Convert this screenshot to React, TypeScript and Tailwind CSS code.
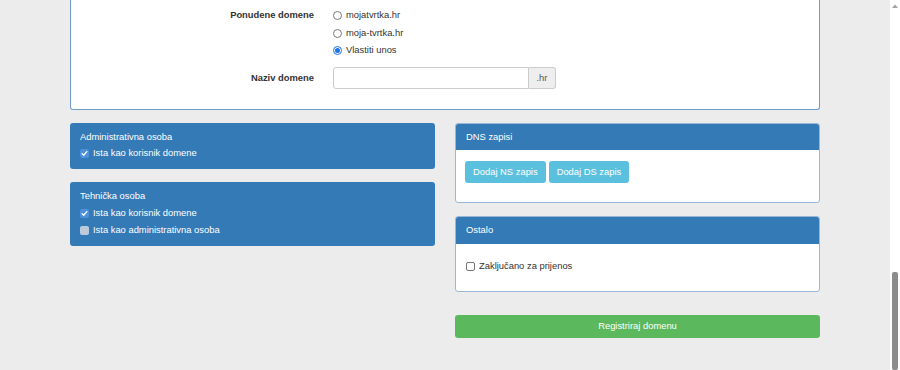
import React from "react";

const font = { fontFamily: '"Liberation Sans", Arial, sans-serif' };

function BlueCheck({ checked, disabled }: { checked?: boolean; disabled?: boolean }) {
  if (checked) {
    return (
      <span className="flex h-[9px] w-[9px] items-center justify-center rounded-[2px] bg-[#4d90dc]">
        <svg width="7" height="7" viewBox="0 0 8 8">
          <path d="M1.3 4.2 L3.1 6 L6.7 1.8" fill="none" stroke="#fff" strokeWidth="1.5" strokeLinecap="round" strokeLinejoin="round" />
        </svg>
      </span>
    );
  }
  return <span className={`h-[9px] w-[9px] rounded-[2px] ${disabled ? "bg-[#bccadc]" : "bg-white"}`} />;
}

function Radio({ checked }: { checked?: boolean }) {
  return (
    <span
      className={`flex h-[9px] w-[9px] items-center justify-center rounded-full border ${
        checked ? "border-[#1a73e8]" : "border-[#767676]"
      } bg-white`}
    >
      {checked && <span className="h-[5px] w-[5px] rounded-full bg-[#1a73e8]" />}
    </span>
  );
}

export default function App() {
  return (
    <div className="flex h-[370px] w-[900px] overflow-hidden text-[9.4px] text-[#333]" style={font}>
      <div className="w-[890px] bg-[#ececec] pl-[70px] pr-[70px]">
        {/* Top panel */}
        <div className="h-[110px] rounded-b-[3px] border-x border-b border-[#6f9cc9] bg-white pt-[6px]">
          <div className="flex">
            <div className="flex h-[18px] w-[243px] items-center justify-end font-bold">Ponudene domene</div>
            <div className="ml-[19px] flex flex-col">
              <label className="flex h-[18px] items-center gap-[4px]">
                <Radio />
                <span>mojatvrtka.hr</span>
              </label>
              <label className="flex h-[18px] items-center gap-[4px]">
                <Radio />
                <span>moja-tvrtka.hr</span>
              </label>
              <label className="flex h-[17px] items-center gap-[4px]">
                <Radio checked />
                <span>Vlastiti unos</span>
              </label>
            </div>
          </div>
          <div className="mt-[8px] flex items-center">
            <div className="w-[243px] text-right font-bold">Naziv domene</div>
            <div className="ml-[19px] flex h-[22px]">
              <div className="w-[196px] rounded-l-[3px] border border-[#ccc] bg-white" />
              <div className="flex w-[27px] items-center justify-center rounded-r-[3px] border border-l-0 border-[#ccc] bg-[#eee] text-[#555]">
                .hr
              </div>
            </div>
          </div>
        </div>

        {/* Lower grid */}
        <div className="mt-[13px] flex gap-[20px]">
          <div className="flex w-[365px] flex-col gap-[13px]">
            <div className="flex h-[46px] flex-col rounded-[3px] bg-[#337ab7] px-[10px] pt-[6px] text-white">
              <div className="flex h-[16px] items-center">Administrativna osoba</div>
              <div className="flex h-[17px] items-center gap-[4px]">
                <BlueCheck checked />
                <span>Ista kao korisnik domene</span>
              </div>
            </div>
            <div className="flex h-[64px] flex-col rounded-[3px] bg-[#337ab7] px-[10px] pt-[6px] text-white">
              <div className="flex h-[16px] items-center">Tehnička osoba</div>
              <div className="flex h-[18px] items-center gap-[4px]">
                <BlueCheck checked />
                <span>Ista kao korisnik domene</span>
              </div>
              <div className="flex h-[17px] items-center gap-[4px]">
                <BlueCheck disabled />
                <span>Ista kao administrativna osoba</span>
              </div>
            </div>
          </div>

          <div className="flex w-[365px] flex-col">
            <div className="h-[80px] overflow-hidden rounded-[3px] border border-[#9ab8d6] bg-white">
              <div className="flex h-[26px] items-center bg-[#337ab7] px-[10px] text-white">DNS zapisi</div>
              <div className="flex gap-[3px] px-[9px] pt-[11px]">
                <button className="h-[22px] rounded-[3px] bg-[#5bc0de] px-[8px] text-white">Dodaj NS zapis</button>
                <button className="h-[22px] rounded-[3px] bg-[#5bc0de] px-[8px] text-white">Dodaj DS zapis</button>
              </div>
            </div>
            <div className="mt-[13px] h-[76px] overflow-hidden rounded-[3px] border border-[#9ab8d6] bg-white">
              <div className="flex h-[27px] items-center bg-[#337ab7] px-[10px] text-white">Ostalo</div>
              <div className="flex h-[44px] items-center gap-[4px] px-[10px]">
                <span className="h-[9px] w-[9px] rounded-[2px] border border-[#767676] bg-white" />
                <span>Zaključano za prijenos</span>
              </div>
            </div>
            <button className="mt-[23px] h-[23px] w-full rounded-[3px] bg-[#5cb85c] text-white">Registriraj domenu</button>
          </div>
        </div>
      </div>

      {/* Scrollbar */}
      <div className="flex w-[10px] flex-col justify-between bg-white">
        <div className="flex justify-center pt-[4px]">
          <svg width="6" height="4" viewBox="0 0 6 4">
            <path d="M0 4 L3 0.5 L6 4 Z" fill="#a3a3a3" />
          </svg>
        </div>
        <div className="mx-[2px] h-[98px] rounded-[2px] bg-[#8c8c8c]" />
      </div>
    </div>
  );
}
